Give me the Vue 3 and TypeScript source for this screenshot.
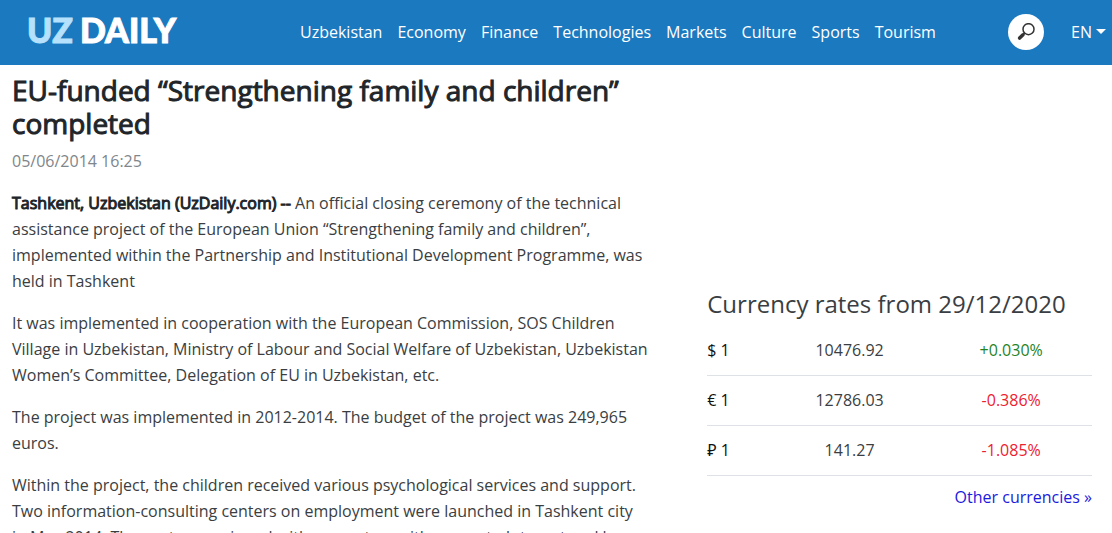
<script setup lang="ts">
const sections: string[] = ['Uzbekistan', 'Economy', 'Finance', 'Technologies', 'Markets', 'Culture', 'Sports', 'Tourism']

interface Rate {
  sign: string
  value: string
  change: string
}

const rates: Rate[] = [
  { sign: '$ 1', value: '10476.92', change: '+0.030%' },
  { sign: '€ 1', value: '12786.03', change: '-0.386%' },
  { sign: '₽ 1', value: '141.27', change: '-1.085%' },
]

const paragraphs: string[] = [
  'It was implemented in cooperation with the European Commission, SOS Children Village in Uzbekistan, Ministry of Labour and Social Welfare of Uzbekistan, Uzbekistan Women’s Committee, Delegation of EU in Uzbekistan, etc.',
  'The project was implemented in 2012-2014. The budget of the project was 249,965 euros.',
  'Within the project, the children received various psychological services and support. Two information-consulting centers on employment were launched in Tashkent city in\u00a0May 2014. The centers equipped with computers with access to Internet and have',
]
</script>

<template>
  <div class="page">
    <header class="bar">
      <a class="logo" href="#" aria-label="UZ Daily"><span class="uz">UZ</span><span>DAILY</span></a>
      <nav class="nav">
        <a v-for="s in sections" :key="s" href="#">{{ s }}</a>
      </nav>
      <div class="tools">
        <button class="search" type="button" aria-label="Search">
          <svg viewBox="0 0 18 18" width="18" height="18" aria-hidden="true">
            <circle cx="11.5" cy="6.2" r="5.5" fill="none" stroke="#333" stroke-width="1.5" />
            <path d="M7.6 10 6 11.6" stroke="#333" stroke-width="1.5" />
            <path d="M6 11.8 2.6 15" stroke="#333" stroke-width="3.6" stroke-linecap="round" />
          </svg>
        </button>
        <button class="lang" type="button">EN<span class="caret"></span></button>
      </div>
    </header>
    <main class="content">
      <article class="article">
        <h1>EU-funded “Strengthening family and children” completed</h1>
        <time datetime="2014-06-05T16:25">05/06/2014 16:25</time>
        <p><strong>Tashkent, Uzbekistan (UzDaily.com) --</strong> An official closing ceremony of the technical assistance project of the European Union “Strengthening family and children”, implemented within the Partnership and Institutional Development Programme, was held in Tashkent</p>
        <p v-for="(p, i) in paragraphs" :key="i">{{ p }}</p>
      </article>
      <aside class="rates">
        <h2>Currency rates from 29/12/2020</h2>
        <table>
          <tbody>
            <tr v-for="r in rates" :key="r.sign">
              <th scope="row">{{ r.sign }}</th>
              <td>{{ r.value }}</td>
              <td :class="r.change.startsWith('+') ? 'up' : 'down'">{{ r.change }}</td>
            </tr>
          </tbody>
        </table>
        <a class="more" href="#">Other currencies »</a>
      </aside>
    </main>
  </div>
</template>

<style>
body {
  margin: 0;
  background: #fff;
}
</style>

<style scoped>
.page {
  height: 100vh;
  overflow: hidden;
  font-family: "Open Sans", "Noto Sans", sans-serif;
  font-size: 16px;
  font-weight: 400;
  line-height: 26px;
  color: #3a3e42;
}
.bar {
  display: flex;
  align-items: center;
  height: 63px;
  padding: 0 6px 2px 27px;
  background: #1b79bf;
}
.bar a {
  color: #fff;
  text-decoration: none;
}
.bar .logo {
  display: flex;
  gap: 7px;
  width: 273px;
  padding-bottom: 3px;
  font-family: Lato, sans-serif;
  font-size: 34px;
  font-weight: 900;
  line-height: 40px;
  -webkit-text-stroke: 1px currentColor;
}
.bar .uz {
  color: #b5e1fc;
}
.nav {
  display: flex;
  gap: 15px;
}
.tools {
  display: flex;
  align-items: center;
  gap: 27px;
  margin-left: auto;
}
button {
  border: 0;
  padding: 0;
  font: inherit;
  cursor: pointer;
}
.search {
  display: flex;
  align-items: center;
  justify-content: center;
  width: 36px;
  height: 36px;
  border-radius: 50%;
  background: #fff;
}
.lang {
  display: flex;
  align-items: center;
  gap: 4px;
  background: none;
  color: #fff;
}
.caret {
  border: 5px solid transparent;
  border-top-color: #fff;
  border-bottom: 0;
}
.content {
  display: grid;
  grid-template-columns: 5fr 3fr;
  column-gap: 54px;
  padding: 9px 20px 0 12px;
}
h1 {
  margin: 0 0 8px;
  font-size: 28px;
  font-weight: 400;
  line-height: 33px;
  color: #212529;
  -webkit-text-stroke: 1px currentColor;
}
time {
  display: block;
  margin-bottom: 16px;
  color: #80868b;
}
p {
  margin: 0 0 16px;
}
strong {
  font-weight: 400;
  color: #212529;
  -webkit-text-stroke: 1px currentColor;
}
.rates {
  display: flex;
  flex-direction: column;
  padding-top: 213px;
}
h2 {
  margin: 0 0 4px;
  font-size: 24px;
  font-weight: 400;
  line-height: 34px;
}
table {
  width: 100%;
  table-layout: fixed;
  border-collapse: collapse;
}
th,
td {
  box-sizing: border-box;
  height: 50px;
  padding: 0;
  border-bottom: 1px solid #dee2e6;
  font-weight: 400;
  text-align: center;
}
th {
  width: 16%;
  text-align: left;
  color: #111;
}
.up {
  color: #1f841f;
}
.down {
  color: #ee2030;
}
.more {
  align-self: flex-end;
  margin-top: 8px;
  color: #1a1ae0;
  text-decoration: none;
}
</style>
